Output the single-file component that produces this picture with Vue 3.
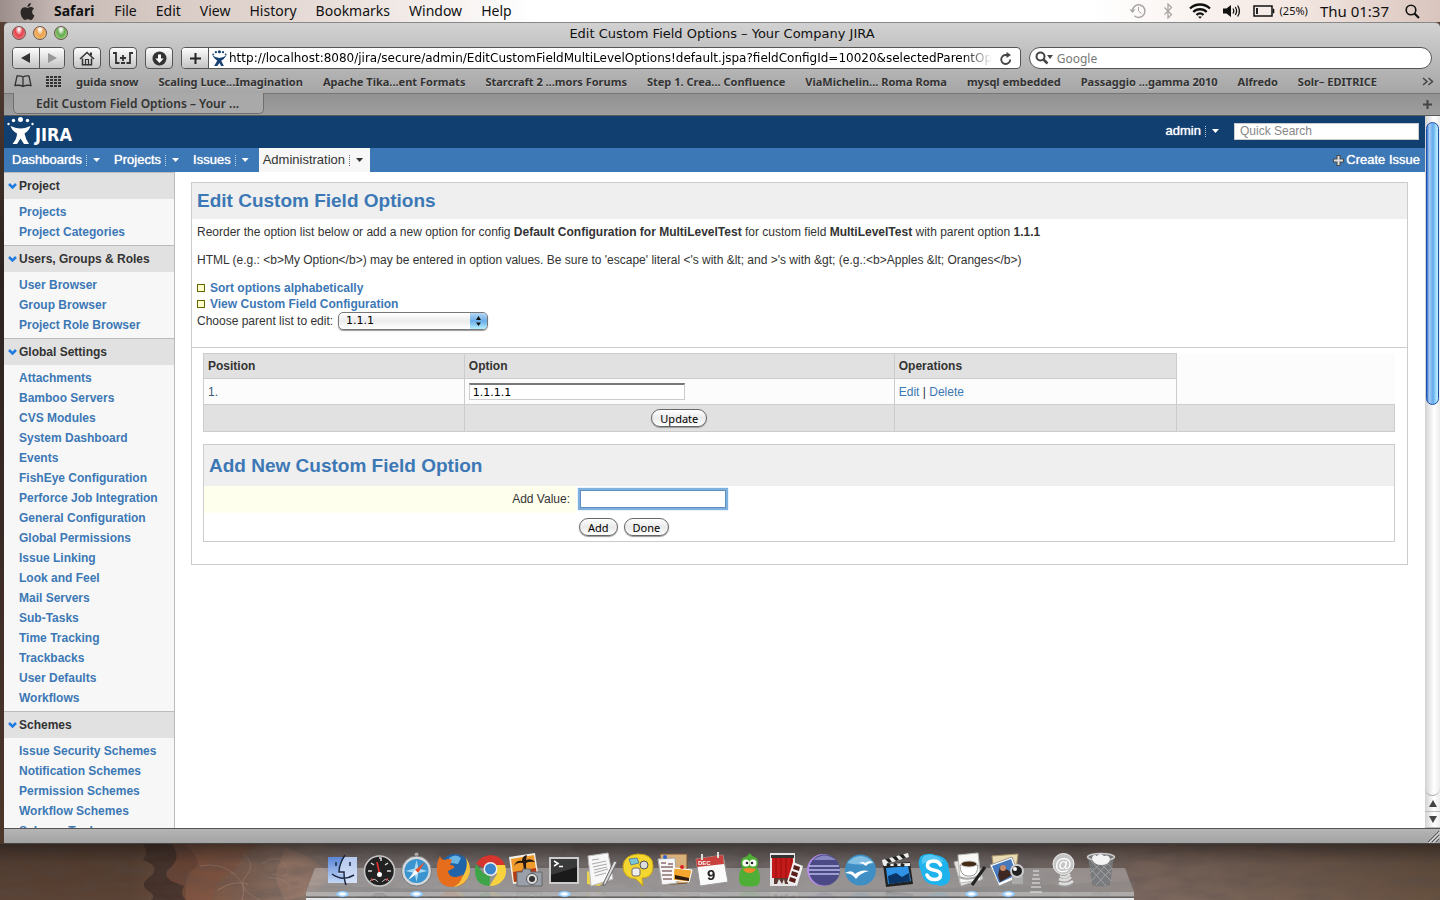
<script setup>
import { ref } from 'vue'

const menus = ['File', 'Edit', 'View', 'History', 'Bookmarks', 'Window', 'Help']
const bookmarks = [
  'guida snow', 'Scaling Luce...Imagination', 'Apache Tika...ent Formats',
  'Starcraft 2 ...mors Forums', 'Step 1. Crea... Confluence', 'ViaMichelin... Roma Roma',
  'mysql embedded', 'Passaggio ...gamma 2010', 'Alfredo', 'Solr– EDITRICE',
]
const url = ref('http://localhost:8080/jira/secure/admin/EditCustomFieldMultiLevelOptions!default.jspa?fieldConfigId=10020&selectedParentOptionId=10034')
const tabs = [
  { name: 'Dashboards' }, { name: 'Projects' }, { name: 'Issues' },
  { name: 'Administration', active: true },
]
const sections = [
  { title: 'Project', items: ['Projects', 'Project Categories'] },
  { title: 'Users, Groups & Roles', items: ['User Browser', 'Group Browser', 'Project Role Browser'] },
  {
    title: 'Global Settings',
    items: ['Attachments', 'Bamboo Servers', 'CVS Modules', 'System Dashboard', 'Events',
      'FishEye Configuration', 'Perforce Job Integration', 'General Configuration',
      'Global Permissions', 'Issue Linking', 'Look and Feel', 'Mail Servers', 'Sub-Tasks',
      'Time Tracking', 'Trackbacks', 'User Defaults', 'Workflows'],
  },
  {
    title: 'Schemes',
    items: ['Issue Security Schemes', 'Notification Schemes', 'Permission Schemes',
      'Workflow Schemes', 'Scheme Tools'],
  },
]
const parentOption = ref('1.1.1')
const optionValue = ref('1.1.1.1')
const newValue = ref('')
const quickSearch = ref('')
const webSearch = ref('')
</script>

<template>
  <div class="desktop">
    <header class="menubar">
      <svg class="apple" viewBox="0 0 24 24" width="17" height="17"><path fill="#2b2727" d="M12.152 6.896c-.948 0-2.415-1.078-3.96-1.04-2.04.027-3.91 1.183-4.961 3.014-2.117 3.675-.546 9.103 1.519 12.09 1.013 1.454 2.208 3.09 3.792 3.039 1.52-.065 2.09-.987 3.935-.987 1.831 0 2.35.987 3.96.948 1.637-.026 2.676-1.48 3.676-2.948 1.156-1.688 1.636-3.325 1.662-3.415-.039-.013-3.182-1.221-3.22-4.857-.026-3.04 2.48-4.494 2.597-4.559-1.429-2.09-3.623-2.324-4.39-2.376-2-.156-3.675 1.09-4.61 1.09zM15.53 3.83c.843-1.012 1.4-2.427 1.245-3.83-1.207.052-2.662.805-3.532 1.818-.78.896-1.454 2.338-1.273 3.714 1.338.104 2.715-.688 3.559-1.701" /></svg>
      <strong class="app-name">Safari</strong>
      <span v-for="m in menus" :key="m" class="menu">{{ m }}</span>
      <div class="status">
        <svg class="faint" width="18" height="18" viewBox="0 0 18 18" fill="none" stroke="#aaa6a5" stroke-width="1.5"><path d="M3.4 9a6.3 6.3 0 1 1 2 4.7" /><path d="M9.5 5v4l3 2.5" stroke-width="1" /><path d="M0.5 7.5h6l-3 3.5z" fill="#aaa6a5" stroke="none" /></svg>
        <svg class="faint" width="10" height="16" viewBox="0 0 10 16" fill="none" stroke="#aaa6a5" stroke-width="1.300"><path d="M1.5 4.5l7 7L5 15V1l3.500 3.500-7 7" /></svg>
        <svg width="22" height="16" viewBox="0 0 22 16" fill="none" stroke="#111" stroke-width="2.400"><path d="M1 5.500a14.500 14.500 0 0 1 20 0" /><path d="M4.300 9a9.500 9.500 0 0 1 13.400 0" /><path d="M7.500 12a5 5 0 0 1 7 0" /><path d="M9 13.500h4l-2 2.200z" fill="#111" stroke="none" /></svg>
        <svg width="18" height="14" viewBox="0 0 18 14" fill="none" stroke="#111" stroke-width="1.300"><path d="M0 4.500h3.500L8 1v12L3.500 9.500H0z" fill="#111" stroke="none" /><path d="M10 4.500q1.500 2.500 0 5M12.300 3q2.600 4 0 8M14.600 1.500q3.700 5.500 0 11" /></svg>
        <div class="battery">
          <svg width="22" height="12" viewBox="0 0 22 12"><rect x="1" y="1" width="18" height="10" fill="none" stroke="#111" stroke-width="1.500" /><path d="M20 4h1v4h-1z" fill="#111" stroke="#111" stroke-width=".6" /><path d="M3 3h2v6H3z" fill="#222" /></svg>
          <span>(25%)</span>
        </div>
        <span class="clock">Thu 01:37</span>
        <svg width="15" height="15" viewBox="0 0 15 15" fill="none" stroke="#111"><circle cx="6" cy="6" r="4.800" stroke-width="1.600" /><path d="M9.500 9.500l4.500 4.500" stroke-width="2.200" /></svg>
      </div>
    </header>

    <div class="window">
      <div class="chrome">
        <div class="titlebar">
          <div class="lights">
            <button class="light red" aria-label="Close"></button>
            <button class="light amber" aria-label="Minimise"></button>
            <button class="light green" aria-label="Zoom"></button>
          </div>
          <span class="title">Edit Custom Field Options – Your Company JIRA</span>
        </div>
        <div class="toolbar">
          <div class="pair">
            <button class="tool" aria-label="Back"><svg width="12" height="10"><path d="M10 0v10L1 5z" fill="#333" /></svg></button>
            <button class="tool" aria-label="Forward"><svg width="12" height="10"><path d="M2 0v10l9-5z" fill="#999" /></svg></button>
          </div>
          <button class="tool single" aria-label="Home"><svg width="16" height="15" viewBox="0 0 16 15" fill="none" stroke="#333" stroke-width="1.500"><path d="M1 8l7-6.500L15 8M3.500 7.500v6.200h9V7.500" /><path d="M12 1.500v3" stroke-width="2" /><path d="M6.500 13.500V8.500h3v5" stroke-width="1.200" /></svg></button>
          <button class="tool single" aria-label="Web clip"><svg width="20" height="14" viewBox="0 0 20 14" fill="none" stroke="#333" stroke-width="1.800"><path d="M0 2h3v10h3.500M20 2h-3v10h-3.500M8 12h4" /><path d="M10 4v6M7 7h6" /></svg></button>
          <button class="tool single" aria-label="Downloads"><svg width="15" height="15" viewBox="0 0 15 15"><circle cx="7.500" cy="7.500" r="7" fill="#333" /><path d="M6 3.500h3v4h2.700L7.500 12 3.300 7.500H6z" fill="#fff" /></svg></button>
          <div class="address">
            <button class="tool add" aria-label="Add bookmark"><svg width="11" height="11"><path d="M5.500 0v11M0 5.500h11" stroke="#222" stroke-width="2" /></svg></button>
            <svg class="favicon" width="16" height="16" viewBox="0 0 36 36" fill="#184175"><circle cx="5" cy="10" r="2" /><circle cx="11" cy="5" r="2.500" /><circle cx="19" cy="4" r="3.500" /><circle cx="27" cy="5" r="2.500" /><circle cx="33" cy="10" r="2" /><path d="M3 12q8 6 16 6t16-6q-5 9-12 12l6 12h-6l-4-7-5 7H7l7-12Q7 20 3 12z" /></svg>
            <input v-model="url" class="url" type="text" aria-label="Address">
            <button class="reload" aria-label="Reload"><svg width="12" height="13" viewBox="0 0 12 13" fill="none" stroke="#444" stroke-width="1.800"><path d="M10.200 7.500A4.500 4.500 0 1 1 6 3h2" /><path d="M6.500 0L11 3 6.500 6z" fill="#444" stroke="none" /></svg></button>
          </div>
          <div class="search">
            <svg width="19" height="14" viewBox="0 0 19 14" fill="none" stroke="#444"><circle cx="5.500" cy="5.500" r="4" stroke-width="2" /><path d="M8.500 8.500l4 4" stroke-width="2.500" /><path d="M12 4h6l-3 4z" fill="#444" stroke="none" /></svg>
            <input v-model="webSearch" type="text" placeholder="Google" aria-label="Web search">
          </div>
        </div>
        <nav class="bookmarks" aria-label="Bookmarks">
          <svg class="book" width="18" height="13" viewBox="0 0 18 13" fill="none" stroke="#333" stroke-width="1.300"><path d="M9 2Q7 .7 3 1L1 10.500q5-.8 8 1 3-1.800 8-1L15 1q-4-.3-6 1zv9.500" /></svg>
          <svg class="grid" width="16" height="12" fill="none" stroke="#333" stroke-width="2" stroke-dasharray="3 1"><path d="M0 1h16M0 4h16M0 7h16M0 10h16" /></svg>
          <a v-for="b in bookmarks" :key="b" href="#">{{ b }}</a>
          <svg class="more" width="12" height="9" fill="none" stroke="#444" stroke-width="1.500"><path d="M1 1l4 3.500L1 8M6.500 1l4 3.500L6.500 8" /></svg>
        </nav>
        <div class="tabrow">
          <div class="browser-tab">Edit Custom Field Options – Your ...</div>
          <button class="new-tab" aria-label="New tab"><svg width="9" height="9"><path d="M4.500 0v9M0 4.500h9" stroke="#444" stroke-width="2" /></svg></button>
        </div>
      </div>

      <div class="viewport">
        <div class="page">
          <div class="top">
            <a href="#" class="logo" aria-label="JIRA home">
              <svg width="28" height="28" viewBox="0 0 28 28" fill="#fff"><circle cx="1.500" cy="7" r="1.200" /><circle cx="6.500" cy="3.500" r="1.700" /><circle cx="13.500" cy="2.500" r="2.500" /><circle cx="20.500" cy="3.500" r="1.700" /><circle cx="25.500" cy="7" r="1.200" /><path d="M3.500 9q6 2.500 10 2.500T23.500 9q-1.500 5-6 7.500Q18.500 22 22 27h-5l-3.500-5.500L10 27H5.500Q10 22 10 16.500 5 14 3.500 9z" /></svg>
              <span>JIRA</span>
            </a>
            <div class="user">
              <a href="#">admin</a><i class="dots"></i><i class="caret"></i>
              <input v-model="quickSearch" type="text" placeholder="Quick Search" aria-label="Quick Search">
            </div>
          </div>
          <nav class="nav" aria-label="Main">
            <a v-for="t in tabs" :key="t.name" href="#" :class="{ active: t.active }">{{ t.name }}<i class="dots"></i><i class="caret"></i></a>
            <a href="#" class="create"><svg width="11" height="11"><path d="M5.500 0v11M0 5.500h11" stroke="#4a4a4a" stroke-width="4" /><path d="M5.500 1v9M1 5.500h9" stroke="#ddd" stroke-width="2" /></svg>Create Issue</a>
          </nav>
          <div class="columns">
            <aside class="sidebar">
              <section v-for="s in sections" :key="s.title">
                <h3><svg width="9" height="7" fill="none" stroke="#1f7be0" stroke-width="2.500"><path d="M1 1l3.500 3.500L8 1" /></svg>{{ s.title }}</h3>
                <ul>
                  <li v-for="i in s.items" :key="i"><a href="#">{{ i }}</a></li>
                </ul>
              </section>
            </aside>
            <main class="main">
              <div class="panel">
                <h1>Edit Custom Field Options</h1>
                <div class="intro">
                  <p>Reorder the option list below or add a new option for config <b>Default Configuration for MultiLevelTest</b> for custom field <b>MultiLevelTest</b> with parent option <b>1.1.1</b></p>
                  <p>HTML (e.g.: &lt;b&gt;My Option&lt;/b&gt;) may be entered in option values. Be sure to 'escape' literal &lt;'s with &amp;lt; and &gt;'s with &amp;gt; (e.g.:&lt;b&gt;Apples &amp;lt; Oranges&lt;/b&gt;)</p>
                  <ul>
                    <li><a href="#">Sort options alphabetically</a></li>
                    <li><a href="#">View Custom Field Configuration</a></li>
                  </ul>
                  <div class="choose">
                    <label for="parent">Choose parent list to edit:</label>
                    <span class="popup">
                      <select id="parent" v-model="parentOption"><option>1.1.1</option></select>
                      <svg width="17" height="16" viewBox="0 0 17 16"><path d="M8.500 3l2.500 4H6zM8.500 13L6 9.500h5z" fill="#111" /></svg>
                    </span>
                  </div>
                </div>
                <div class="body">
                  <table class="options">
                    <colgroup><col class="c1"><col class="c2"><col class="c3"><col></colgroup>
                    <thead>
                      <tr><th>Position</th><th>Option</th><th>Operations</th><td class="blank"></td></tr>
                    </thead>
                    <tbody>
                      <tr>
                        <td>1.</td>
                        <td><input v-model="optionValue" type="text" aria-label="Option 1"></td>
                        <td><a href="#">Edit</a> | <a href="#">Delete</a></td>
                        <td class="blank"></td>
                      </tr>
                      <tr class="foot">
                        <td></td><td class="center"><button class="aqua">Update</button></td><td></td><td></td>
                      </tr>
                    </tbody>
                  </table>
                  <form class="add-form" @submit.prevent>
                    <h2>Add New Custom Field Option</h2>
                    <div class="field">
                      <label for="value">Add Value:</label>
                      <div><input id="value" v-model="newValue" type="text"></div>
                    </div>
                    <div class="actions">
                      <button class="aqua">Add</button>
                      <button class="aqua" type="button">Done</button>
                    </div>
                  </form>
                </div>
              </div>
            </main>
          </div>
        </div>
        <div class="scrollbar">
          <div class="track"><div class="thumb"></div></div>
          <button aria-label="Scroll up"><svg width="8" height="7"><path d="M4 0l4 7H0z" fill="#444" /></svg></button>
          <button aria-label="Scroll down"><svg width="8" height="7"><path d="M4 7L0 0h8z" fill="#444" /></svg></button>
        </div>
      </div>
      <div class="statusbar"><svg width="14" height="14" stroke="#555"><path d="M2 13L13 2M6 13l7-7M10 13l3-3" /><path d="M3 14L14 3M7 14l7-7" stroke="#ddd" /></svg></div>
    </div>

    <div class="ground">
      <svg class="rock" viewBox="0 0 1440 56" preserveAspectRatio="none">
        <defs>
          <linearGradient id="gr" x2="1" y2="0"><stop offset="0" stop-color="#5a4234" /><stop offset=".09" stop-color="#5b4233" /><stop offset=".15" stop-color="#7d5947" /><stop offset=".2" stop-color="#8b7468" /><stop offset=".25" stop-color="#7d7675" /><stop offset=".7" stop-color="#77706e" /><stop offset=".8" stop-color="#7f6a60" /><stop offset="1" stop-color="#66503f" /></linearGradient>
          <linearGradient id="sh" x2="0" y2="1"><stop offset="0" stop-color="#1b1513" stop-opacity=".6" /><stop offset=".35" stop-color="#1b1513" stop-opacity=".15" /><stop offset="1" stop-color="#1b1513" stop-opacity="0" /></linearGradient>
          <filter id="grain" x="0" y="0" width="1" height="1"><feTurbulence type="fractalNoise" baseFrequency=".03 .09" numOctaves="4" seed="8" /><feColorMatrix values="0 0 0 0 .1  0 0 0 0 .08  0 0 0 0 .08  1.600 0 0 0 -.6" /></filter>
        </defs>
        <path fill="url(#gr)" d="M0 0h1440v56H0z" />
        <path d="M143 0q6 8 0 16 18 6 8 16-12 8-4 14 10 6 4 10h35q-3-25 8-31t-9-25z" fill="#3a2a25" opacity=".7" />
        <path d="M172 0q10 14-2 24t14 18q-5 8 2 14h25q5-24 24-30 8-18 25-26z" fill="#8b5741" opacity=".6" />
        <g fill="none" stroke="#c59b86" opacity=".45"><path d="M200 22q20-4 34 8t8 26M243 10q14 10 3 22t14 24M262 20q16-12 24 2t-14 8M268 34q18-2 24 12M218 46q14-10 30-6" /></g>
        <path d="M285 4q35 10 45 30-20 20-45 22-12-20-8-30t8-22z" fill="#b08571" opacity=".5" />
        <path d="M0 0h330v56H0zM1130 0h310v56h-310z" filter="url(#grain)" opacity=".45" />
        <path fill="url(#sh)" d="M0 0h1440v56H0z" />
      </svg>
      <div class="dock">
        <svg class="shelf" viewBox="0 0 828 33" preserveAspectRatio="none">
          <path d="M9 1h810l9 24v5H0v-5z" fill="#c6c6c8" opacity=".45" />
          <path d="M0 18q400 16 828-4l0 16H0z" fill="#777" opacity=".25" />
          <path d="M0 25h828v5H0z" fill="#ccc" opacity=".5" />
          <path d="M0 30h828" stroke="#555" />
          <path d="M0 31h828v2H0z" fill="#e8ebee" />
        </svg>
        <button aria-label="Finder" class="on"><svg viewBox="0 0 37 40"><defs><linearGradient id="fi" x2="0" y2="1"><stop offset="0" stop-color="#5b86d6" /><stop offset="1" stop-color="#c3d8f6" /></linearGradient></defs><path d="M4 6h29v26H4z" fill="url(#fi)" /><path d="M19 6h14v26H20l-1-9h-5q0-9 5-17z" fill="#dbe6f8" opacity=".7" /><path d="M21 4q-6 9-6 17h5q0 8 2 13M8 23q11 8 22 1M12 11v4M26 11v4" fill="none" stroke="#1b2742" stroke-width="1.500" /></svg></button>
        <button aria-label="Dashboard"><svg viewBox="0 0 37 40"><circle cx="18.500" cy="20" r="15" fill="#222" stroke="#c8c8c8" stroke-width="1.500" /><path d="M18.500 23L16 11" stroke="#e33" stroke-width="1.500" /><circle cx="18.500" cy="23.500" r="2.500" fill="#fff" /><path d="M7 20h4M26 20h4M18 7h2v3M10 12l3 2M27 12l-3 2" stroke="#ddd" stroke-width="1.500" /><path d="M9 30q4-4 8 1M21 31q4-5 7-1" stroke="#bbb" fill="none" /><path d="M12 30l-2-3M25 30l2-3" stroke="#e33" /></svg></button>
        <button aria-label="Safari" class="on"><svg viewBox="0 0 37 40"><circle cx="18.500" cy="3.500" r="2" fill="#aaa" /><circle cx="18.500" cy="20" r="15" fill="#d5d8da" stroke="#777" /><circle cx="18.500" cy="20" r="12" fill="#3a94cf" /><path d="M18.500 9l2 8.500 9 2.500-9 2-2 9-2-9-9-2 9-2.500z" fill="#a9d9f2" /><path d="M27 11l-7 11-3-3z" fill="#e8512a" /><path d="M10 29l7-10 3 3z" fill="#fff" /></svg></button>
        <button aria-label="Firefox"><svg viewBox="0 0 37 40"><circle cx="20" cy="17" r="14" fill="#2163a8" /><path d="M14 7q7-5 12 0l-3 6-7-1z" fill="#68b4e4" /><path d="M31 7q6 8 3 17-3 9-14 12l-4-7q11 1 14-8 3-7 1-14z" fill="#f9c23c" /><path d="M5 5q1 4 5 4 4-2 7 0l-2 5q5 0 4 3l-6 3q1 6 7 6 5 0 8-3-2 12-12 13Q3 35 2 21q-1-9 3-16z" fill="#e66d1c" /><path d="M16 36q10 1 16-8-4 9-16 8z" fill="#e66d1c" /></svg></button>
        <button aria-label="Chrome"><svg viewBox="0 0 37 40"><path d="M18 20L4 13q4-8 14.500-9Q29 4 33 14H18z" fill="#d5352c" /><path d="M18.500 20l-1 15Q3 34 3 20q0-4 1-7l8 10z" fill="#3da548" /><path d="M18 14h15q3 9-2 15-5 6-13.500 6L25 23z" fill="#f7d33f" /><circle cx="18.500" cy="18" r="7" fill="#f1f1ef" /><circle cx="18.500" cy="18" r="5.500" fill="#3c85cc" /></svg></button>
        <button aria-label="iPhoto"><svg viewBox="0 0 37 40"><path d="M0 6l26-4 4 27-26 4z" fill="#f2efe9" /><path d="M2 8l23-4 3 23-23 4z" fill="#f09a2c" /><path d="M4 21l23-4 1 10-23 4z" fill="#b33a16" /><path d="M12 30q4-10 2-18-6-1-9 3 2-6 8-5 0-5 5-6l-1 5q6-2 9 2-6-1-9 1 1 9-1 18z" fill="#241812" /><path d="M8 21h5l1-3h7l1 3h11v14H8z" fill="#9aa0a9" stroke="#666" /><circle cx="23" cy="28" r="5.500" fill="#ddd" stroke="#555" /><circle cx="23" cy="28" r="3" fill="#333" /></svg></button>
        <button aria-label="Terminal" class="on"><svg viewBox="0 0 37 40"><path d="M3 6h30v27H3z" fill="#ccc" /><path d="M5 8h26v23H5z" fill="#1a1a1a" /><path d="M5 8h26v8L5 24z" fill="#3a3a3a" /><path d="M8 10l4 2.500-4 2.500M13 15.500h4" stroke="#fff" fill="none" stroke-width="1.500" /></svg></button>
        <button aria-label="TextEdit"><svg viewBox="0 0 37 40"><path d="M4 20l20 8-8 7-12-2z" fill="#e9d44c" /><path d="M5 5l20-3 5 26-22 7z" fill="#f7f7f7" stroke="#bbb" /><path d="M9 9l7-1M9 13l14-3M10 16l14-3M11 19l13-3M11 22l14-4M12 25l11-3" stroke="#aaa" /><path d="M34 11L23 33l-3 2 1-4L31 10z" fill="#ddd" stroke="#666" /></svg></button>
        <button aria-label="Adium chat"><svg viewBox="0 0 37 40"><path d="M18 3q15 0 15 12T22 27l1 8-7-7Q3 27 3 15 4 4 18 3z" fill="#f3d62f" stroke="#c9a516" /><path d="M9 8l8-1 2 5-8 2z" fill="#7cc5d6" stroke="#358" stroke-width=".6" /><circle cx="24" cy="14" r="4" fill="#ddd" stroke="#555" /><rect x="12" y="17" width="8" height="8" rx="2" fill="#eee" stroke="#766" /></svg></button>
        <button aria-label="Photo board"><svg viewBox="0 0 37 40"><path d="M3 3h27v29L5 34z" fill="#d7b17c" stroke="#765332" /><path d="M1 8l17-1 2 25-15 2z" fill="#f6f6f6" stroke="#aaa" /><path d="M4 12h5M11 13h5M4 16h12M5 20h10M5 24h10M6 28h9" stroke="#a58f8f" stroke-width="2" /><path d="M17 17l18 2-3 12-16-2z" fill="#f4a62d" stroke="#fff" /><path d="M18 28l14 2v-3l-14-3z" fill="#2e1a0f" /><circle cx="8" cy="6" r="2" fill="#36c" /><circle cx="25" cy="16" r="2" fill="#d22" /></svg></button>
        <button aria-label="iCal"><svg viewBox="0 0 37 40"><path d="M2 8l27-4 5 27-28 4z" fill="#fafafa" stroke="#999" /><path d="M2 8l27-4 1 9-27 3z" fill="#c9403c" /><path d="M8 3v6M24 1v6" stroke="#ddd" stroke-width="2" /><text x="4" y="14" class="dec">DEC</text><text x="13" y="29" class="day">9</text></svg></button>
        <button aria-label="Adium"><svg viewBox="0 0 37 40"><path d="M18.500 2q3 4 7 5 3 5 0 10l2 2q3 9 0 15-8 3-18 0-3-6 0-15l2-2q-3-5 0-10 5-1 7-5z" fill="#4eae35" /><circle cx="15" cy="12" r="3.500" fill="#fff" /><circle cx="22" cy="12" r="3.500" fill="#fff" /><circle cx="16" cy="12" r="1.300" fill="#222" /><circle cx="21" cy="12" r="1.300" fill="#222" /><path d="M12 18q6-2 13 0-2 4-6.500 4T12 18z" fill="#ef8a2c" /></svg></button>
        <button aria-label="Photo Booth"><svg viewBox="0 0 37 40"><path d="M2 2h25v33H2z" fill="#e5e5e5" /><path d="M3 4h23v3H3z" fill="#333" /><path d="M4 7h21v20H4z" fill="#c41a1a" /><path d="M8 7v20M13 7v20M18 7v20M23 7v20" stroke="#9a0f0f" /><path d="M6 27h14v6h-3l-1-5-2 5-3-5-2 5H6z" fill="#5b3a32" /><path d="M25 11l10 4-6 20-10-4z" fill="#f1f1f1" /><path d="M26 14l6 2-1 4-6-2zM24 20l6 2-1 4-6-2zM22 26l6 2-1 4-6-2z" fill="#5a1f1a" /></svg></button>
        <button aria-label="Eclipse"><svg viewBox="0 0 37 40"><circle cx="18" cy="19" r="16" fill="#b48be6" /><circle cx="19.500" cy="19" r="15.500" fill="#4c4a86" /><path d="M8 9q12-9 23 0z" fill="#8886c0" /><path d="M4 15h30M4 19h31M4 23h30" stroke="#b9bce8" stroke-width="1.600" /></svg></button>
        <button aria-label="OpenOffice"><svg viewBox="0 0 37 40"><circle cx="18.500" cy="19" r="15.500" fill="#3f8fc5" /><path d="M5 12q13-14 27 0-12 3-27 0z" fill="#83bfe2" /><path d="M3 22q7-4 10 1 6-5 14-3-9 2-13 8-4-6-11-6zM17 12q5-2 6 0 4-3 8-1-5 1-7 4-3-3-7-3z" fill="#fff" /></svg></button>
        <button aria-label="iMovie"><svg viewBox="0 0 37 40"><path d="M4 13l27-2 3 22-27 3z" fill="#222" /><path d="M7 17l22-2 3 15-23 3z" fill="#2e93e6" /><path d="M9 25l8-3 6 4 7-4 1 8-21 3z" fill="#0b3566" /><path d="M3 9l26-7 1 4-26 8z" fill="#eee" /><path d="M6 8l4 4 3-1-3-4zM13 6l4 4 3-1-3-4zM20 4l4 4 3-1-3-4z" fill="#222" /><path d="M4 13l27-1v3H5z" fill="#eee" /><path d="M8 13l3 2M15 13l3 2M22 13l3 2" stroke="#222" stroke-width="3" /></svg></button>
        <button aria-label="Skype"><svg viewBox="0 0 37 40"><path d="M11 3q5-1 8 1 14 1 14 16 3 6-1 12-5 4-11 2Q7 34 5 20 1 13 4 6q3-3 7-3z" fill="#1fb3ee" /><path d="M8 5q11-4 20 6-12-3-22 2-1-5 2-8z" fill="#7cd6f8" opacity=".6" /><path d="M24.500 14q-2-4-7-4-6 0-6 4.500 0 3 6 4.500 7 1 7 5 0 4.500-6 4.500-5.500 0-7.500-4.500" fill="none" stroke="#fff" stroke-width="3.600" stroke-linecap="round" /></svg></button>
        <button aria-label="Java editor" class="on"><svg viewBox="0 0 37 40"><path d="M1 11l22-6 7 23-22 7z" fill="#e9e6df" stroke="#aaa" /><path d="M5 4l20-2 3 27-21 3z" fill="#f8f8f6" stroke="#bbb" /><path d="M7 14h18q0 10-7 11h-4q-7-1-7-11z" fill="#fff" stroke="#999" /><ellipse cx="16" cy="13" rx="8" ry="3" fill="#452a14" stroke="#ccc" /><path d="M6 26q10 4 20-1" fill="none" stroke="#aaa" stroke-width="2" /><path d="M32 16L19 34" stroke="#222" stroke-width="3" /></svg></button>
        <button aria-label="Preview" class="on"><svg viewBox="0 0 37 40"><path d="M2 5l26-2-3 24-20 2z" fill="#e9dcb4" stroke="#a89566" /><path d="M0 14l22-8 8 20-21 9z" fill="#fff" stroke="#999" /><path d="M2 15l19-7 6 16-18 8z" fill="#4879bd" /><path d="M10 16q5-3 6 2l8 5-14 8-2-7z" fill="#3d2720" /><circle cx="13" cy="17" r="3" fill="#c98c6b" /><path d="M22 25h11v8H22z" fill="#aaa" /><circle cx="27" cy="20" r="6" fill="#222" stroke="#ccc" stroke-width="2" /><circle cx="25" cy="18" r="2" fill="#fff" /></svg></button>
        <svg class="divider" width="18" height="26" viewBox="0 0 18 26"><path d="M6 2h6M6 6h6M5 10h8M5 14h8M4 18h10M3 23h12" stroke="#ddd" stroke-width="2" opacity=".6" /></svg>
        <button aria-label="Mail spring"><svg viewBox="0 0 37 40"><ellipse cx="20" cy="33" rx="8" ry="3" fill="#999" /><path d="M14 32q8 3 14-2M14 28q8 3 12-2M15 25q6 3 10-2" fill="none" stroke="#ddd" stroke-width="2.500" /><circle cx="18.500" cy="13" r="10.500" fill="#c5c5c5" stroke="#eee" /><text x="10" y="19" class="at">@</text></svg></button>
        <button aria-label="Trash"><svg viewBox="0 0 37 40"><path d="M6 5h26l-4 29q-9 3-18 0z" fill="#77797c" opacity=".9" /><path d="M9 10l20 20M14 8l15 15M21 8l8 8M8 17l16 18M28 10L9 30M22 9L8 22M30 17L14 34" stroke="#bbb" opacity=".6" /><ellipse cx="19" cy="6" rx="13.500" ry="3.500" fill="#777" stroke="#ccc" stroke-width="1.500" /><path d="M10 7q1-5 5-2 3-4 7 0 5-2 6 3-1 6-9 6t-9-7z" fill="#f4f4f4" /></svg></button>
      </div>
    </div>
  </div>
</template>

<style>
html, body { margin: 0; height: 100%; background: #51392c; }
#app { height: 100%; }
</style>

<style scoped>
.desktop {
  display: flex; flex-direction: column; height: 100vh; overflow: hidden;
  background: linear-gradient(#5a4035, #2c2320 30%, #3a2a26 60%, #51392c);
  font: 12px/14px "Liberation Sans", Arial, sans-serif; color: #333;
}
.desktop *, .desktop *::before { box-sizing: border-box; }
button, input, select { margin: 0; padding: 0; border: 0; background: none; font: inherit; color: inherit; }
a { text-decoration: none; color: #3c78b5; }
h1, h2, h3, p, ul { margin: 0; padding: 0; list-style: none; }

.menubar {
  display: flex; align-items: center; height: 22px; flex: none; padding: 0 20px 0 19px;
  background: linear-gradient(90deg, #9c8f8b, #c6b9b5 4%, #d9cbc5 12%, #e7dcd7 22%, #fff 37%, #fff 76%, #f3e7e2 90%, #d9c5bd);
  font: 14px/22px "Noto Sans", "Open Sans", sans-serif; color: #111;
}
.app-name { margin: 0 20px 0 18px; }
.menu { margin-right: 19px; }
.status { display: flex; align-items: center; gap: 12px; margin-left: auto; }
.faint { margin-right: 4px; }
.clock { margin-right: 4px; font-size: 15px; line-height: 20px; }
.battery { display: flex; align-items: center; gap: 5px; font-size: 11px; }

.window { display: flex; flex-direction: column; flex: 1; min-height: 0; margin-left: 4px; font-family: "Noto Sans", "Open Sans", sans-serif; }
.chrome { flex: none; border-top: 1px solid #888; border-radius: 5px 5px 0 0; background: linear-gradient(#d2d2d2, #a6a6a6 70px, #a6a6a6); }
.titlebar { position: relative; height: 23px; text-align: center; font: 13px/21px "DejaVu Sans", sans-serif; color: #111; }
.lights { position: absolute; left: 8px; top: 3px; display: flex; gap: 7px; }
.light { width: 14px; height: 14px; border-radius: 7px; border: 1px solid #6b5450; }
.red { background: radial-gradient(ellipse at 50% 20%, #fff 5%, #e4414a 45%, #f3a0a0); }
.amber { background: radial-gradient(ellipse at 50% 20%, #fff 5%, #eb9d48 45%, #fbe39a); }
.green { background: radial-gradient(ellipse at 50% 20%, #fff 5%, #63a94e 45%, #c4eda6); }
.toolbar { display: flex; align-items: center; gap: 8px; height: 24px; padding: 0 8px; }
.pair { display: flex; border: 1px solid #555; border-radius: 4px; overflow: hidden; }
.tool { display: grid; place-items: center; width: 26px; height: 20px; background: linear-gradient(#fdfdfd, #c4c4c4); }
.pair .tool + .tool { width: 25px; border-left: 1px solid #555; }
.single { width: 28px; height: 22px; border: 1px solid #555; border-radius: 4px; }
.address { display: flex; align-items: center; flex: 1; min-width: 0; height: 22px; border: 1px solid #555; border-radius: 4px; background: #fff; overflow: hidden; }
.add { flex: none; border-right: 1px solid #555; width: 27px; }
.favicon { flex: none; margin: 0 2px; }
.url { flex: 1; min-width: 0; font: 12px/20px "DejaVu Sans", sans-serif; height: 20px; color: #000; mask-image: linear-gradient(90deg, #000 calc(100% - 28px), transparent); }
.reload { display: grid; place-items: center; width: 28px; }
.search { display: flex; align-items: center; flex: 0 0 28.4%; height: 22px; padding-left: 5px; gap: 3px; border: 1px solid #555; border-radius: 11px; background: #fff; }
.search input { flex: 1; min-width: 0; font-size: 12px; height: 20px; }
.search input::placeholder { color: #777; opacity: 1; }
.bookmarks { display: flex; align-items: center; height: 23px; padding: 0 6px 0 10px; font-size: 11px; font-weight: 700; white-space: nowrap; }
.bookmarks a { margin-right: 20px; color: #333; text-shadow: 0 1px 0 #c4c4c4; }
.bookmarks svg { flex: none; }
.bookmarks .grid { margin: 0 14px; }
.bookmarks .more { margin-left: auto; }
.tabrow { display: flex; justify-content: space-between; height: 23px; padding: 0 8px 0 9px; border-top: 1px solid #777; border-bottom: 1px solid #5a5a5a; background: linear-gradient(#929292, #9e9e9e); }
.browser-tab { width: 251px; height: 21px; margin-top: -1px; padding-left: 22px; border: 1px solid #6f6f6f; border-top: 0; border-radius: 0 0 5px 5px; background: #a9a9a9; font-size: 12px; font-weight: 600; line-height: 21px; white-space: nowrap; }

.viewport { display: flex; flex: 1; min-height: 0; background: #fff; font-family: "Liberation Sans", Arial, sans-serif; }
.page { display: flex; flex-direction: column; flex: 1; min-width: 0; }
.top { display: flex; align-items: center; justify-content: space-between; flex: none; height: 32px; padding: 0 6px 2px 3px; background: #114070; }
.logo { display: flex; align-items: flex-end; color: #fff; }
.logo span { font: bold 18px/20px "DejaVu Sans Condensed", sans-serif; }
.user { display: flex; align-items: center; font-size: 13px; }
.user a, .nav a { color: #fff; text-shadow: 0 0 1px #fff; }
.dots { width: 1px; height: 11px; margin: 0 6px 0 4px; border-left: 1px dotted currentColor; opacity: .7; }
.user .dots { color: #fff; }
.caret { width: 7px; height: 4px; background: currentColor; clip-path: polygon(0 0, 100% 0, 50% 100%); }
.user .caret { color: #fff; margin-right: 15px; }
.user input { width: 185px; height: 17px; padding: 0 5px; background: #fff; border: 1px solid #ccc; font-size: 12px; }
.user input::placeholder { color: #888; opacity: 1; }
.nav { display: flex; flex: none; height: 24px; padding: 0 5px 0 4px; background: #3c78b5; font-size: 13px; }
.nav a { display: flex; align-items: center; padding: 0 7px 0 4px; margin-right: 3px; }
.nav a.active { background: #f7f7f7; color: #333; text-shadow: none; }
.nav a.create { gap: 2px; margin: 0 0 0 auto; padding: 0; }
.columns { display: flex; flex: 1; min-height: 0; overflow: hidden; }
.sidebar { flex: none; width: 171px; border-right: 1px solid #bbb; background: #f7f7f7; font-weight: bold; }
.sidebar h3 { display: flex; align-items: center; gap: 2px; height: 27px; padding-left: 4px; border-top: 1px solid #bbb; background: #e1e1e1; font-size: 12px; }
.sidebar ul { padding: 3px 0; }
.sidebar li { padding-left: 15px; line-height: 20px; }
.main { flex: 1; min-width: 0; padding: 10px 17px 0 16px; }
.panel { border: 1px solid #ccc; }
h1, h2 { padding-left: 5px; background: #efefef; color: #3c78b5; font-size: 19px; line-height: 36px; }
.intro { padding: 6px 5px 17px; border-bottom: 1px solid #ccc; }
.intro p { margin-bottom: 14px; }
.intro ul { margin-top: -1px; }
.intro li { display: flex; align-items: center; gap: 5px; line-height: 16px; font-weight: bold; }
.intro li::before { content: ""; width: 8px; height: 8px; border: 1px solid #660; background: #ffc; }
.choose { display: flex; align-items: center; gap: 5px; }
.popup { position: relative; display: flex; width: 150px; height: 18px; border: 1px solid #777; border-radius: 5px; background: linear-gradient(#fff, #ececec 50%, #fff); overflow: hidden; box-shadow: 0 1px 1px #999; }
.popup select { flex: 1; padding-left: 7px; appearance: none; font: 11px/16px "DejaVu Sans", sans-serif; color: #000; }
.popup svg { position: absolute; right: 0; top: 0; background: linear-gradient(#b7d6f3, #69aee8 50%, #b6f0ff); pointer-events: none; }
.body { padding: 5px 12px 22px 11px; }
.options { width: 100%; border-collapse: collapse; table-layout: fixed; }
.c1 { width: 21.9%; } .c2 { width: 36.1%; } .c3 { width: 23.7%; }
.options th, .options td { height: 26px; padding: 0 4px; border: 1px solid #ccc; background: #fcfcfc; text-align: left; }
.options thead th, .options thead td { height: 25px; }
.options th, .options .foot td { background: #e1e1e1; }
.options .foot td { height: 27px; }
.options .blank { border-width: 0; }
.options .center { text-align: center; }
.options td:first-child { color: #3c5a78; }
.options input { display: block; width: 216px; max-width: 100%; height: 17px; padding: 0 3px; border: 1px solid #ccc; border-top: 2px solid #777; background: #fff; font: 11px/14px "DejaVu Sans", sans-serif; color: #000; }
.aqua { height: 18px; padding: 0 8px; border: 1px solid #666; border-radius: 9px; background: linear-gradient(#fff, #eaeaea 50%, #fff); box-shadow: 0 1px 1px #999; font: 11px/15px "Noto Sans", sans-serif; color: #000; vertical-align: middle; }
.add-form { margin-top: 12px; border: 1px solid #ccc; }
.add-form h2 { line-height: 41px; }
.field, .actions { display: flex; }
.field label { width: 372px; height: 27px; padding-right: 6px; background: #ffe; text-align: right; line-height: 26px; }
.field div { padding: 4px 3px 0 4px; }
.field input { display: block; width: 146px; height: 18px; border: 1px solid #5d8fc0; box-shadow: 0 0 1px 2px #7fb0de; background: #fff; padding: 0 3px; font: 11px/16px "Noto Sans", sans-serif; outline: 0; }
.actions { gap: 6px; padding: 5px 0 5px 375px; }

.scrollbar { display: flex; flex-direction: column; flex: none; width: 15px; background: linear-gradient(90deg, #d2d2d2, #fff 60%, #ececec); }
.track { flex: 1; padding: 6px 1px 0; border-bottom: 1px solid #aaa; border-radius: 0 0 8px 8px; }
.thumb { height: 42%; border: 1px solid #1b4fa8; border-radius: 7px; background: linear-gradient(90deg, #2e6fd0, #a9cbf2 20%, #62abef 55%, #b5ecfd 90%); }
.scrollbar button { display: grid; place-items: center; height: 16px; border-bottom: 1px solid #bbb; }
.statusbar { display: flex; justify-content: flex-end; flex: none; height: 16px; border-top: 1px solid #555; border-bottom: 1px solid #444; background: linear-gradient(#b5b5b5, #a3a3a3); }

.ground { position: relative; display: flex; justify-content: center; flex: none; height: 56px; }
.rock { position: absolute; inset: 0; width: 100%; height: 100%; }
.dock { position: relative; display: flex; width: 828px; padding: 7px 14px 0 18px; }
.shelf { position: absolute; left: 0; bottom: 0; width: 100%; height: 33px; }
.dock button { position: relative; display: flex; align-items: flex-start; flex: none; width: 37px; height: 49px; }
.dock button svg { flex: none; width: 37px; height: 40px; -webkit-box-reflect: below -4px linear-gradient(transparent 70%, rgba(255, 255, 255, .3)); }
.dock .on::after { content: ""; position: absolute; left: 12px; bottom: 3px; width: 13px; height: 6px; border-radius: 50%; background: radial-gradient(ellipse, #fff 20%, #8cc8ff 60%, transparent); }
.divider { position: relative; flex: none; margin-top: 18px; }
.dec { font: bold 6px "Liberation Sans", sans-serif; fill: #fff; }
.day { font: bold 15px "Liberation Sans", sans-serif; fill: #222; }
.at { font: bold 17px "Liberation Sans", sans-serif; fill: #fff; }
</style>
